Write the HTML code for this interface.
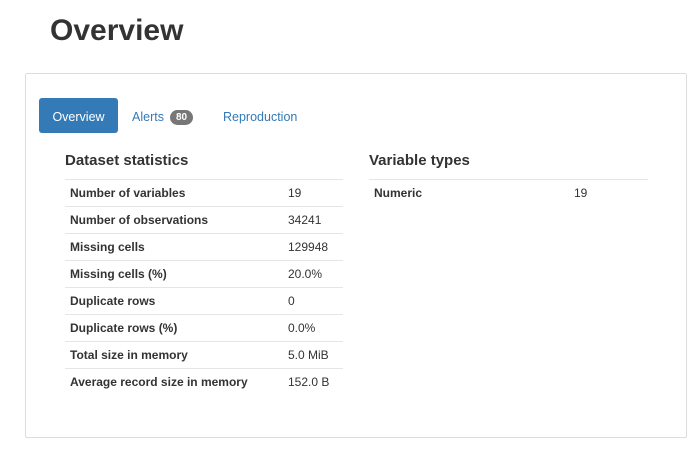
<!DOCTYPE html>
<html><head><style>
body{margin:0;width:700px;height:454px;background:#fff;font-family:"Liberation Sans",Arial,sans-serif;color:#333;position:relative;overflow:hidden}
h1{position:absolute;left:50px;top:13px;margin:0;font-size:30px;font-weight:bold;line-height:36px}
.panel{position:absolute;left:25px;top:73px;width:660px;height:363px;border:1px solid #ddd;border-radius:2px}
.tab{position:absolute;top:100px;height:35px;line-height:35px;font-size:12.5px;color:#337ab7}
.active{top:98px;left:39px;width:79px;background:#337ab7;color:#fff;text-align:center;border-radius:3px;line-height:38px}
.badge{display:inline-block;background:#777;color:#fff;font-size:10px;font-weight:bold;border-radius:9px;padding:0 6px;line-height:15px;margin-left:6px;vertical-align:1px}
h4{position:absolute;margin:0;font-size:15px;font-weight:bold;top:152px}
table{position:absolute;top:179px;border-collapse:collapse;font-size:12px}
td{height:26px;border-top:1px solid #e5e5e5;padding:0 5px;}
td.k{font-weight:bold}
</style></head><body>
<h1>Overview</h1>
<div class="panel"></div>
<div class="tab active">Overview</div>
<div class="tab" style="left:132px">Alerts<span class="badge">80</span></div>
<div class="tab" style="left:223px">Reproduction</div>
<h4 style="left:65px">Dataset statistics</h4>
<table style="left:65px;width:278px">
<tr><td class="k" style="width:208px">Number of variables</td><td>19</td></tr>
<tr><td class="k">Number of observations</td><td>34241</td></tr>
<tr><td class="k">Missing cells</td><td>129948</td></tr>
<tr><td class="k">Missing cells (%)</td><td>20.0%</td></tr>
<tr><td class="k">Duplicate rows</td><td>0</td></tr>
<tr><td class="k">Duplicate rows (%)</td><td>0.0%</td></tr>
<tr><td class="k">Total size in memory</td><td>5.0 MiB</td></tr>
<tr><td class="k">Average record size in memory</td><td>152.0 B</td></tr>
</table>
<h4 style="left:369px">Variable types</h4>
<table style="left:369px;width:279px">
<tr><td class="k" style="width:190px">Numeric</td><td>19</td></tr>
</table>
</body></html>
